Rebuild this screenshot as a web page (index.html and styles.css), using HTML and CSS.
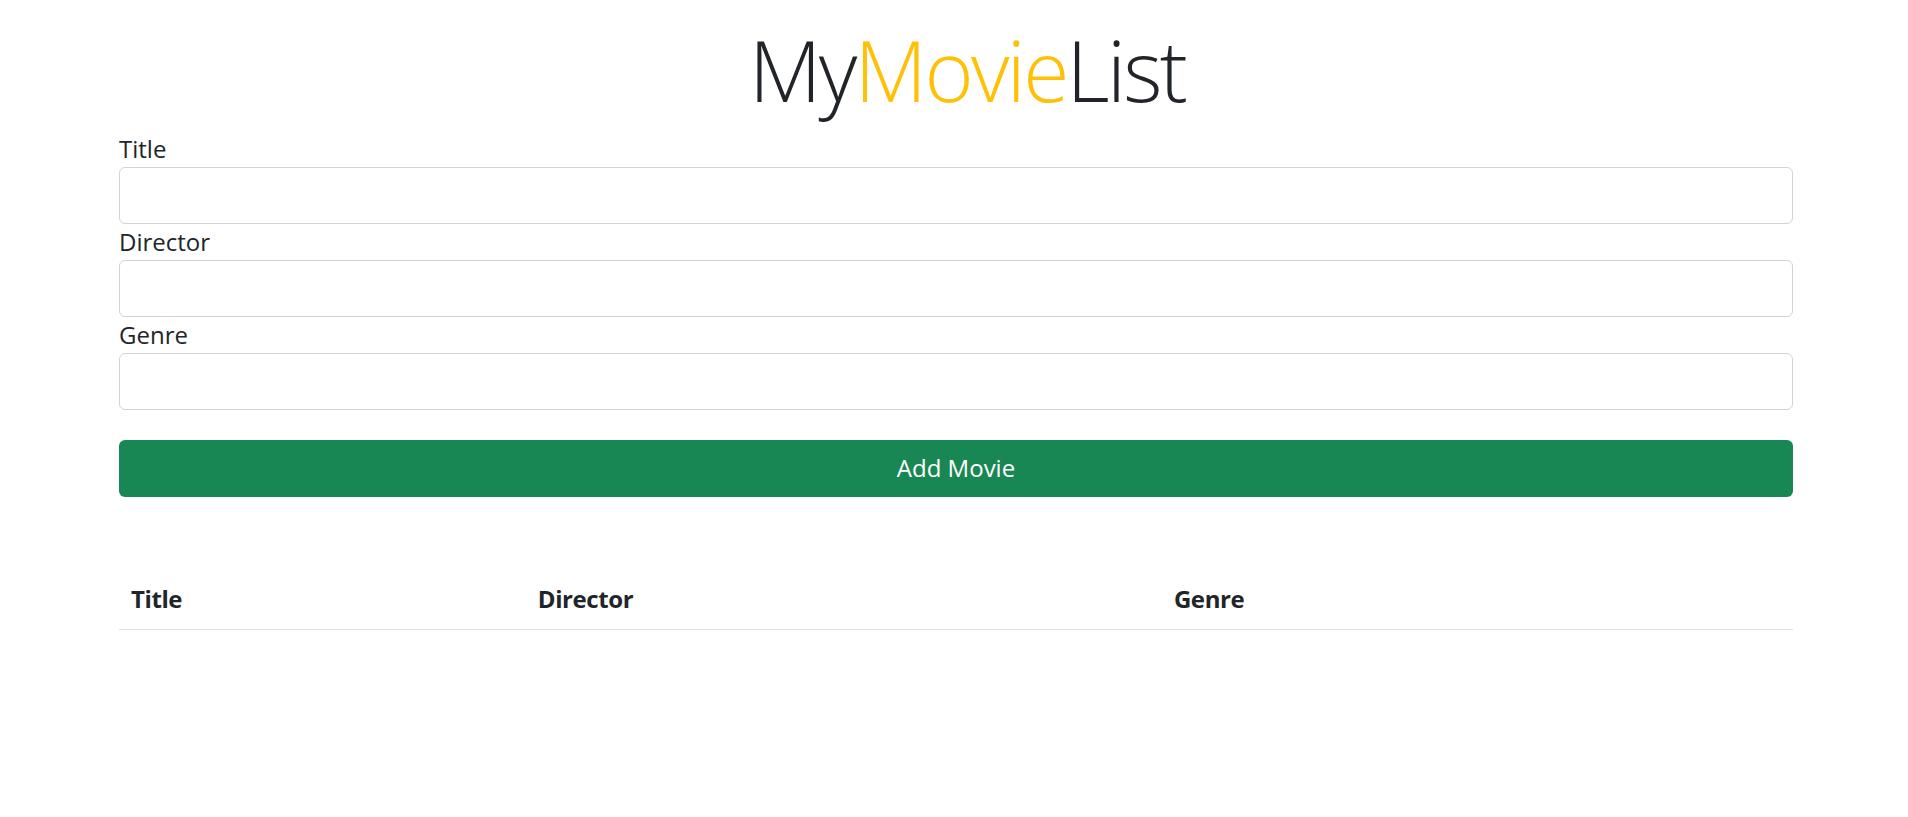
FILE: index.html
```html
<!DOCTYPE html>
<html lang="en">
<head>
<meta charset="utf-8">
<title>MyMovieList</title>
<link rel="stylesheet" href="styles.css">
</head>
<body>
<div class="page">
  <h1 class="brand">My<span class="accent">Movie</span>List</h1>
  <form class="movie-form">
    <label class="field-label" for="title">Title</label>
    <input class="field-input" id="title" type="text">
    <label class="field-label" for="director">Director</label>
    <input class="field-input" id="director" type="text">
    <label class="field-label" for="genre">Genre</label>
    <input class="field-input" id="genre" type="text">
    <button class="add-btn" type="button">Add Movie</button>
  </form>
  <table class="movie-table">
    <thead>
      <tr>
        <th class="col-title">Title</th>
        <th class="col-director">Director</th>
        <th class="col-genre">Genre</th>
      </tr>
    </thead>
    <tbody></tbody>
  </table>
</div>
</body>
</html>
```
FILE: styles.css
```css
* { box-sizing: border-box; }
html, body { margin: 0; padding: 0; background: #fff; }
body {
  font-family: "Open Sans", "Noto Sans", sans-serif;
  font-size: 24px;
  line-height: 1.5;
  color: #212529;
}
.page {
  padding: 20px 115px 0 119px;
}
.brand {
  margin: 0 0 10px;
  padding-left: 22px;
  text-align: center;
  font-size: 84px;
  font-weight: 300;
  line-height: 1.2;
  letter-spacing: -2.7px;
  color: #212529;
}
.accent { color: #ffc107; }
.movie-form {
  display: flex;
  flex-direction: column;
}
.field-label {
  display: block;
  line-height: 36px;
}
.field-input {
  display: block;
  width: 100%;
  height: 57px;
  border: 1px solid #ced4da;
  border-radius: 6px;
  font: inherit;
  padding: 0 18px;
  background: #fff;
}
.add-btn {
  margin-top: 30px;
  height: 57px;
  width: 100%;
  border: none;
  border-radius: 6px;
  background: #198754;
  color: #fff;
  font: inherit;
}
.movie-table {
  margin-top: 72px;
  width: 100%;
  border-collapse: collapse;
}
.movie-table th {
  text-align: left;
  font-weight: 700;
  padding: 12px;
  line-height: 36px;
  letter-spacing: -0.4px;
  border-bottom: 1px solid #dee2e6;
}
.col-title { width: 24.3%; }
.col-director { width: 38%; }
.col-genre { width: 37.7%; }
```
